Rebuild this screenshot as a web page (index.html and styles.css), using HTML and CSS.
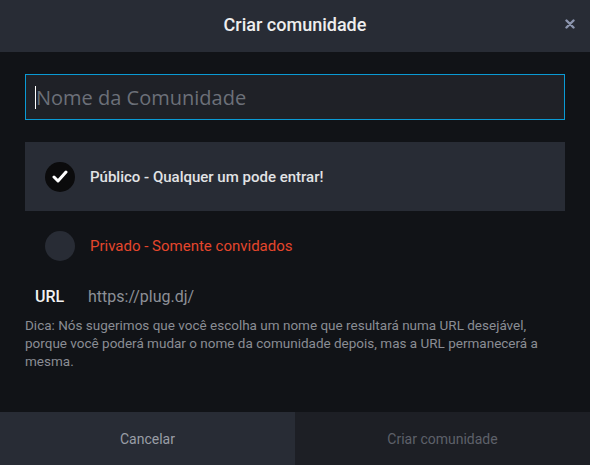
FILE: index.html
```html
<!DOCTYPE html>
<html lang="pt">
<head>
  <meta charset="UTF-8">
  <title>Criar comunidade</title>
  <link rel="stylesheet" href="styles.css">
</head>
<body>
  <div class="dialog">
    <header class="dialog-head">
      <span class="dialog-title">Criar comunidade</span>
      <button class="close">
        <svg width="10" height="10" viewBox="0 0 10 10"><path d="M1.5 1.5 L8.5 8.5 M8.5 1.5 L1.5 8.5" stroke="#8c95ae" stroke-width="2.4" stroke-linecap="round"/></svg>
      </button>
    </header>

    <div class="dialog-body">
      <div class="field">
        <span class="caret"></span>
        <input type="text" class="name-input" placeholder="Nome da Comunidade">
      </div>

      <div class="option selected">
        <span class="radio">
          <svg width="16" height="13" viewBox="0 0 16 13"><path d="M2 7 L6 11 L14 2" fill="none" stroke="#fff" stroke-width="3" stroke-linecap="round" stroke-linejoin="round"/></svg>
        </span>
        <span class="option-label">Público - Qualquer um pode entrar!</span>
      </div>
      <div class="option private">
        <span class="radio"></span>
        <span class="option-label">Privado - Somente convidados</span>
      </div>

      <div class="url-row">
        <span class="url-label">URL</span>
        <span class="url-value">https://plug.dj/</span>
      </div>
      <p class="hint">Dica: Nós sugerimos que você escolha um nome que resultará numa URL desejável, porque você poderá mudar o nome da comunidade depois, mas a URL permanecerá a mesma.</p>
    </div>

    <footer class="dialog-foot">
      <button class="btn cancel">Cancelar</button>
      <button class="btn submit">Criar comunidade</button>
    </footer>
  </div>
</body>
</html>
```

FILE: styles.css
```css
body {
  margin: 0;
  background: #111317;
  font-family: Roboto, "Liberation Sans", sans-serif;
}
.dialog {
  width: 590px;
  height: 465px;
  display: flex;
  flex-direction: column;
  background: #111317;
}
.dialog-head {
  height: 52px;
  background: #282c35;
  display: flex;
  align-items: center;
  justify-content: center;
  position: relative;
}
.dialog-title {
  color: #eeeeee;
  font-size: 18px;
  font-weight: 500;
  margin-top: -3px;
}
.close {
  position: absolute;
  right: 15px;
  top: 19px;
  background: none;
  border: none;
  padding: 0;
  line-height: 0;
  cursor: pointer;
}
.dialog-body {
  flex-grow: 1;
  padding: 22px 25px 0;
}
.field {
  position: relative;
  height: 46px;
  box-sizing: border-box;
  border: 1px solid #0a9ad4;
  background: #1f2127;
}
.name-input {
  width: 100%;
  height: 100%;
  box-sizing: border-box;
  background: transparent;
  border: none;
  outline: none;
  padding: 0 0 0 10px;
  font-family: "Open Sans", sans-serif;
  font-size: 20px;
  color: #eeeeee;
}
.name-input::placeholder {
  color: #6c7079;
}
.caret {
  position: absolute;
  left: 9px;
  top: 11px;
  width: 1px;
  height: 23px;
  background: #ffffff;
}
.option {
  height: 69px;
  display: flex;
  align-items: center;
  padding-left: 20px;
  margin-top: 22px;
}
.option.selected {
  background: #282c35;
}
.option.private {
  margin-top: 0;
  height: 70px;
}
.radio {
  width: 30px;
  height: 30px;
  border-radius: 50%;
  background: #282c35;
  display: flex;
  align-items: center;
  justify-content: center;
  margin-right: 15px;
}
.selected .radio {
  background: #0b0b0c;
}
.option-label {
  font-size: 15px;
  color: #e2e3e5;
  font-weight: 500;
}
.private .option-label {
  color: #e4462c;
  font-weight: 400;
}
.url-row {
  display: flex;
  align-items: center;
  padding-left: 10px;
  margin-top: 5px;
  height: 20px;
}
.url-label {
  width: 53px;
  color: #f2f2f2;
  font-size: 16px;
  font-weight: 500;
}
.url-value {
  color: #8d9097;
  font-size: 16px;
}
.hint {
  margin: 10px 0 0;
  color: #8a8d94;
  font-size: 13.5px;
  line-height: 18px;
}
.dialog-foot {
  height: 53px;
  display: flex;
}
.btn {
  flex: 1;
  border: none;
  font-family: Roboto, sans-serif;
  font-size: 14px;
  cursor: pointer;
}
.cancel {
  background: #282c35;
  color: #9a9ea6;
}
.submit {
  background: #1d1f25;
  color: #5e616a;
}
```
